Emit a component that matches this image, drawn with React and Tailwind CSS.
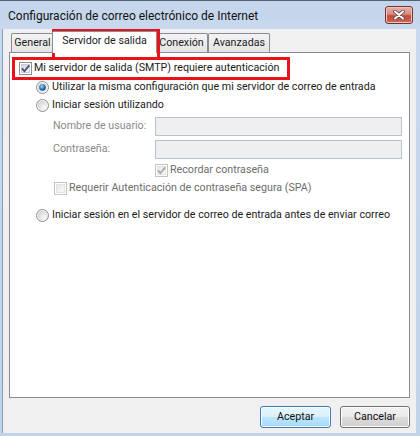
import React from "react";

function Check({ checked, disabled }) {
  const border = disabled ? "#c4c4c4" : "#8e8f8f";
  const mark = disabled ? "#a9a9a9" : "#3b4a82";
  return (
    <svg width="13" height="13" viewBox="0 0 13 13" className="shrink-0">
      <defs>
        <linearGradient id="cbIn" x1="0" y1="0" x2="1" y2="1">
          <stop offset="0" stopColor="#cdd0d6" />
          <stop offset="1" stopColor="#f7f7f7" />
        </linearGradient>
        <linearGradient id="cbInDis" x1="0" y1="0" x2="1" y2="1">
          <stop offset="0" stopColor="#e6e6e6" />
          <stop offset="1" stopColor="#fafafa" />
        </linearGradient>
      </defs>
      <rect x="0.5" y="0.5" width="12" height="12" fill="#ffffff" stroke={border} />
      <rect x="2.5" y="2.5" width="8" height="8" fill={disabled ? "url(#cbInDis)" : "url(#cbIn)"} stroke={disabled ? "#e2e2e2" : "#c9ccd2"} />
      {checked && <path d="M3 6.4 L5.4 9.2 L10.2 3.4" stroke={mark} strokeWidth="1.7" fill="none" />}
    </svg>
  );
}

function Radio({ checked }) {
  return (
    <svg width="13" height="13" viewBox="0 0 13 13" className="shrink-0">
      <defs>
        <radialGradient id="rdIn" cx="0.7" cy="0.7" r="0.8">
          <stop offset="0" stopColor="#fbfbfb" />
          <stop offset="1" stopColor="#cfd1d4" />
        </radialGradient>
        <radialGradient id="rdDot" cx="0.4" cy="0.35" r="0.7">
          <stop offset="0" stopColor="#9fd6f5" />
          <stop offset="0.6" stopColor="#2a72b8" />
          <stop offset="1" stopColor="#123d6e" />
        </radialGradient>
      </defs>
      <circle cx="6.5" cy="6.5" r="6" fill="#f4f4f4" stroke="#8c8e90" />
      <circle cx="6.5" cy="6.5" r="4.6" fill="url(#rdIn)" />
      {checked && <circle cx="6.5" cy="6.5" r="3.3" fill="url(#rdDot)" />}
    </svg>
  );
}

function CloseButton() {
  return (
    <div className="w-[28px] h-[18px] rounded-[3px] border border-[#6e3530] bg-[linear-gradient(to_bottom,#e8b3aa_0%,#d98a7e_45%,#c4483a_55%,#cc6a5a_100%)] shadow-[inset_0_0_0_1px_#f0c4bc] flex items-center justify-center">
      <svg width="12" height="10" viewBox="0 0 12 10">
        <path d="M2 1.5 L10 8.5 M10 1.5 L2 8.5" stroke="#4a4a4a" strokeWidth="3.6" strokeLinecap="round" />
        <path d="M2 1.5 L10 8.5 M10 1.5 L2 8.5" stroke="#ffffff" strokeWidth="2" strokeLinecap="round" />
      </svg>
    </div>
  );
}

const TABS = [
  { label: "General", w: "w-[43px]" },
  { label: "Servidor de salida", w: "w-[105px]", active: true },
  { label: "Conexión", w: "w-[53px]" },
  { label: "Avanzadas", w: "w-[62px]" },
];

export default function App() {
  return (
    <div className="relative w-[420px] h-[436px] flex flex-col overflow-hidden border-t border-[#55606e] bg-[linear-gradient(to_bottom,#c3d5ec,#c9d9ee_30px,#c0d4ea)] font-['Roboto','Noto_Sans',sans-serif] text-[10.7px] text-[#1b1b1b] whitespace-nowrap">
      {/* barra de título */}
      <div className="h-[28px] shrink-0 flex items-center justify-between pl-[8px] pr-[7px]">
        <span className="text-[12px] text-[#111] pt-[1px]">Configuración de correo electrónico de Internet</span>
        <CloseButton />
      </div>

      {/* área de cliente */}
      <div className="flex-1 ml-[2px] mr-[4px] mb-[3px] border-l border-[#7f9dc2] bg-[#f0f0f0] px-[6px] flex flex-col">
        {/* pestañas */}
        <div className="flex items-end h-[23px] pl-[2px]">
          {TABS.map((t) =>
            t.active ? (
              <div
                key={t.label}
                className={`${t.w} -mx-[2px] h-[22px] -mb-[1px] relative z-10 bg-white border border-b-0 border-[#898c95] rounded-t-[2px] flex items-center justify-center pb-[2px]`}
              >
                {t.label}
              </div>
            ) : (
              <div
                key={t.label}
                className={`${t.w} h-[19px] bg-[linear-gradient(to_bottom,#f4f4f4,#e4e4e4)] border border-b-0 border-[#898c95] rounded-t-[2px] flex items-center justify-center`}
              >
                {t.label}
              </div>
            )
          )}
        </div>

        {/* panel */}
        <div className="h-[346px] bg-white border border-[#898c95] pl-[9px] pr-[7px] pt-[6px] flex flex-col">
          <div className="h-[18px] flex items-center gap-[2px]">
            <Check checked />
            <span>Mi servidor de salida (SMTP) requiere autenticación</span>
          </div>
          <div className="h-[18px] mt-[1px] ml-[17px] flex items-center gap-[3px]">
            <Radio checked />
            <span>Utilizar la misma configuración que mi servidor de correo de entrada</span>
          </div>
          <div className="h-[18px] ml-[17px] flex items-center gap-[3px]">
            <Radio />
            <span>Iniciar sesión utilizando</span>
          </div>
          <div className="h-[19px] mt-[3px] ml-[34px] flex items-center">
            <span className="w-[102px] shrink-0 text-[#8a8a8a]">Nombre de usuario:</span>
            <div className="flex-1 h-full bg-[#efefef] border border-[#b9c3cd]" />
          </div>
          <div className="h-[19px] mt-[4px] ml-[34px] flex items-center">
            <span className="w-[102px] shrink-0 text-[#8a8a8a]">Contraseña:</span>
            <div className="flex-1 h-full bg-[#efefef] border border-[#b9c3cd]" />
          </div>
          <div className="h-[18px] mt-[2px] ml-[136px] flex items-center gap-[2px] text-[#6d6d6d]">
            <Check checked disabled />
            <span>Recordar contraseña</span>
          </div>
          <div className="h-[18px] ml-[35px] flex items-center gap-[2px] text-[#6d6d6d]">
            <Check disabled />
            <span>Requerir Autenticación de contraseña segura (SPA)</span>
          </div>
          <div className="h-[18px] mt-[9px] ml-[17px] flex items-center gap-[3px]">
            <Radio />
            <span>Iniciar sesión en el servidor de correo de entrada antes de enviar correo</span>
          </div>
        </div>

        {/* botones */}
        <div className="flex justify-end gap-[9px] mt-[8px]">
          <button className="w-[71px] h-[22px] rounded-[3px] border border-[#3c7fb1] bg-[linear-gradient(to_bottom,#eaf6fd_0%,#d9f0fc_50%,#bee6fd_50%,#a7d9f5_100%)] shadow-[inset_0_0_0_1px_#f4fbfe] text-[#111]">
            Aceptar
          </button>
          <button className="w-[70px] h-[22px] rounded-[3px] border border-[#707070] bg-[linear-gradient(to_bottom,#f2f2f2_0%,#ebebeb_50%,#dddddd_50%,#cfcfcf_100%)] shadow-[inset_0_0_0_1px_#fcfcfc] text-[#111]">
            Cancelar
          </button>
        </div>
      </div>

      {/* marcas rojas */}
      <div className="absolute left-[52px] top-[28px] w-[108px] h-[29px] border-[3px] border-b-0 border-[#e8121b] pointer-events-none" />
      <div className="absolute left-[12px] top-[56px] w-[278px] h-[23px] border-[3px] border-[#e8121b] pointer-events-none" />
    </div>
  );
}
